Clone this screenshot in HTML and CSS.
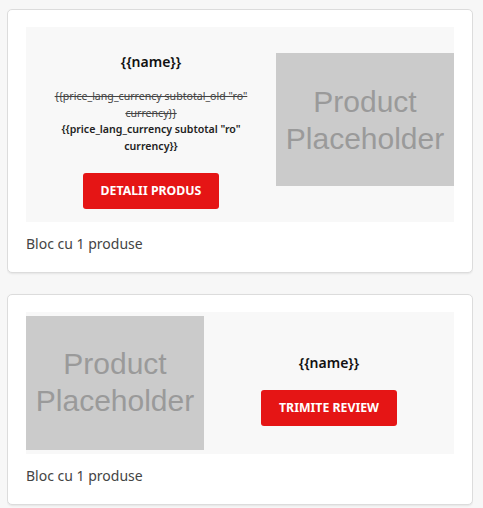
FILE: index.html
```html
<!DOCTYPE html>
<html lang="ro">
<head>
  <meta charset="UTF-8" />
  <title>Blocuri produse</title>
  <link rel="stylesheet" href="styles.css">
</head>
<body>

  <div class="card">
    <div class="block">
      <div class="info">
        <div class="name">{{name}}</div>
        <div class="price">
          <s class="old">{{price_lang_currency subtotal_old "ro" currency}}</s><br>
          {{price_lang_currency subtotal "ro" currency}}
        </div>
        <a class="btn" href="#">DETALII PRODUS</a>
      </div>
      <div class="thumb thumb-top">Product Placeholder</div>
    </div>
    <div class="caption">Bloc cu 1 produse</div>
  </div>

  <div class="card">
    <div class="block">
      <div class="thumb thumb-side">Product Placeholder</div>
      <div class="info info-review">
        <div class="name">{{name}}</div>
        <a class="btn" href="#">TRIMITE REVIEW</a>
      </div>
    </div>
    <div class="caption">Bloc cu 1 produse</div>
  </div>

</body>
</html>
```

FILE: styles.css
```css
body {
  margin: 9px 10px 0 7px;
  background-color: #f7f7f7;
  font-family: "Noto Sans", "Segoe UI", sans-serif;
  color: #222;
}

.card {
  background-color: #fff;
  border: 1px solid #dcdcdc;
  border-radius: 5px;
  box-shadow: 0 1px 2px rgba(0, 0, 0, 0.08);
  padding: 17px 18px 19px;
  margin-bottom: 21px;
}

.block {
  display: flex;
  background-color: #f8f8f8;
}

.info {
  flex: 1;
  padding: 25px 18px 13px;
  text-align: center;
}

.info-review {
  padding-top: 41px;
  padding-bottom: 13px;
}

.name {
  font-size: 14px;
  line-height: 19px;
  font-weight: 600;
  color: #111;
  margin-bottom: 17px;
}

.price {
  font-size: 10.6px;
  line-height: 16.5px;
  font-weight: 600;
  color: #222;
  margin-bottom: 19px;
}

.price .old {
  font-weight: 400;
  color: #444;
}

.btn {
  display: inline-block;
  width: 136px;
  height: 36px;
  line-height: 36px;
  border-radius: 3px;
  background-color: #e51515;
  color: #fff;
  font-size: 12.3px;
  font-weight: 700;
  text-decoration: none;
}

.info-review .name {
  margin-bottom: 18px;
}

.thumb {
  width: 178px;
  height: 133px;
  display: flex;
  align-items: center;
  justify-content: center;
  text-align: center;
  background-color: #cbcbcb;
  color: #9a9a9a;
  font-family: "Liberation Sans", Arial, sans-serif;
  font-size: 30px;
  line-height: 37px;
}

.thumb-top {
  margin-top: 26px;
}

.thumb-side {
  height: 134px;
  margin: 4px 0;
  padding-bottom: 2px;
  box-sizing: border-box;
}

.caption {
  margin-top: 13px;
  font-size: 14px;
  line-height: 18px;
  color: #444;
}
```
